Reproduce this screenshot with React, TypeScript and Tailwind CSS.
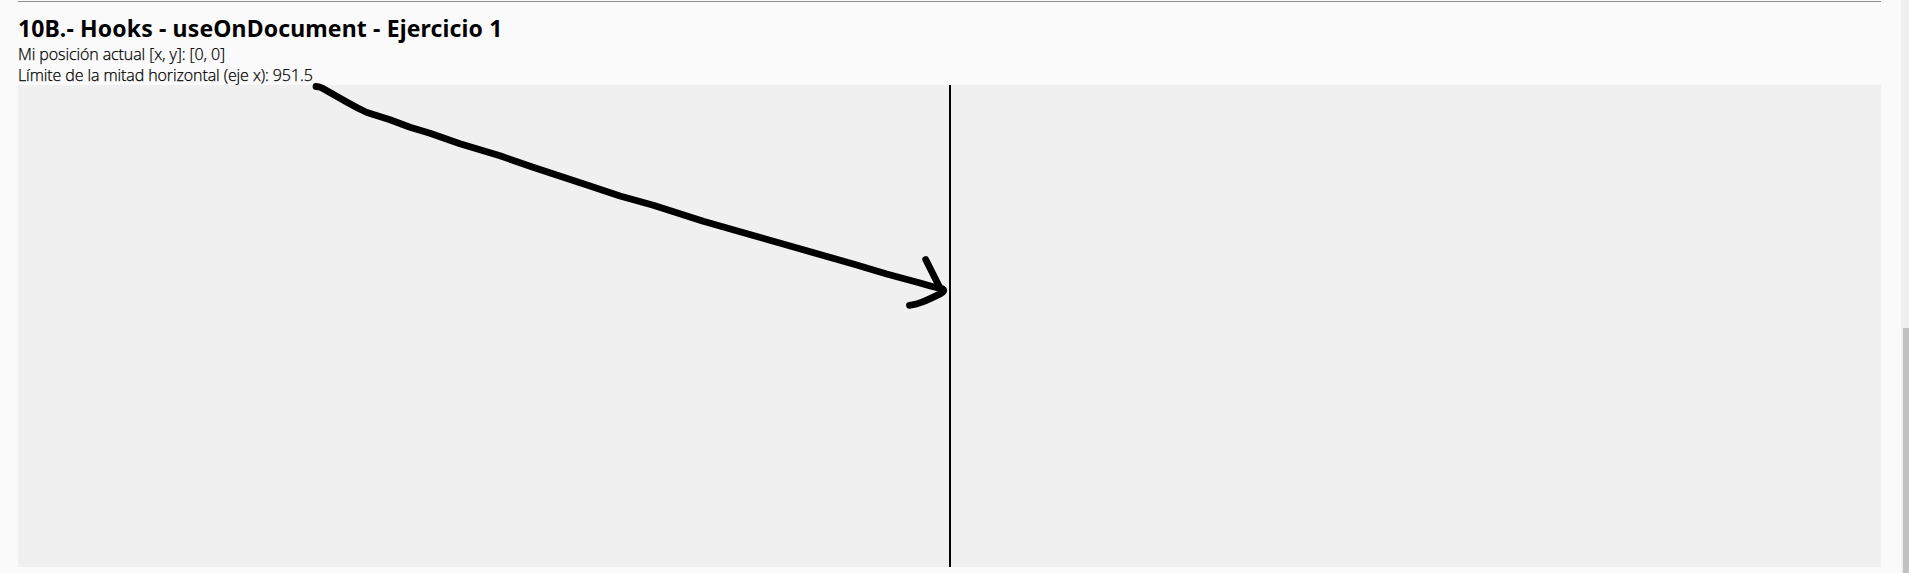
export default function App() {
  return (
    <div className="flex h-[573px] w-full overflow-hidden bg-[#fafafa] font-['Noto_Sans','Open_Sans',sans-serif] text-black">
      <main className="flex min-w-0 flex-1 flex-col pr-5 pl-[18px]">
        <hr className="mt-px h-px shrink-0 border-0 bg-[#8e928f]" />
        <h2 className="mt-[11px] h-[31px] text-[23px] leading-[30px] font-bold tracking-[0.14px] whitespace-nowrap">
          <span>10B.- Hooks - useOnDocument - Ejercicio 1</span>
        </h2>
        <p className="h-[21px] font-['Open_Sans','Noto_Sans',sans-serif] text-base leading-[21px] font-light tracking-[-0.09px] whitespace-nowrap [-webkit-text-stroke:0.25px_black]">
          <span>Mi posición actual [x, y]: [0, 0]</span>
        </p>
        <p className="h-5 font-['Open_Sans','Noto_Sans',sans-serif] text-base leading-[21px] font-light tracking-[-0.09px] whitespace-nowrap [-webkit-text-stroke:0.25px_black]">
          <span>Límite de la mitad horizontal (eje x): 951.5</span>
        </p>
        <section className="relative flex h-[482px] justify-center bg-[#f0f0f0]">
          <div className="h-full w-0.5 bg-black" />
          <svg
            className="absolute top-0 left-0 overflow-visible"
            width="940"
            height="240"
            viewBox="18 85 940 240"
            fill="none"
            stroke="black"
            strokeWidth="6.8"
            strokeLinecap="round"
            strokeLinejoin="round"
          >
            <path d="M316 86.5Q319 86.5 322 88L346.7 102Q357 108 367 112.5L390 119.8L410 127.2L430 133.3L460 143.8L500 155.8L533 167.2L587 185L620 196L653.3 205.3L703.3 221.3L753.3 235.5L803.3 249.8L853.3 264L886.7 274L920 283Q931 286.5 942 288.8" />
            <path d="M925.7 259.5L940 288Q947 289.7 941 293.4Q930 299 922 302.2Q917 304.2 909.5 305.3" />
          </svg>
        </section>
      </main>
      <aside className="flex w-2 shrink-0 flex-col items-end bg-[#efefef]">
        <div className="mt-[328px] w-1.5 flex-1 bg-[#c1c1c1]" />
      </aside>
    </div>
  );
}
